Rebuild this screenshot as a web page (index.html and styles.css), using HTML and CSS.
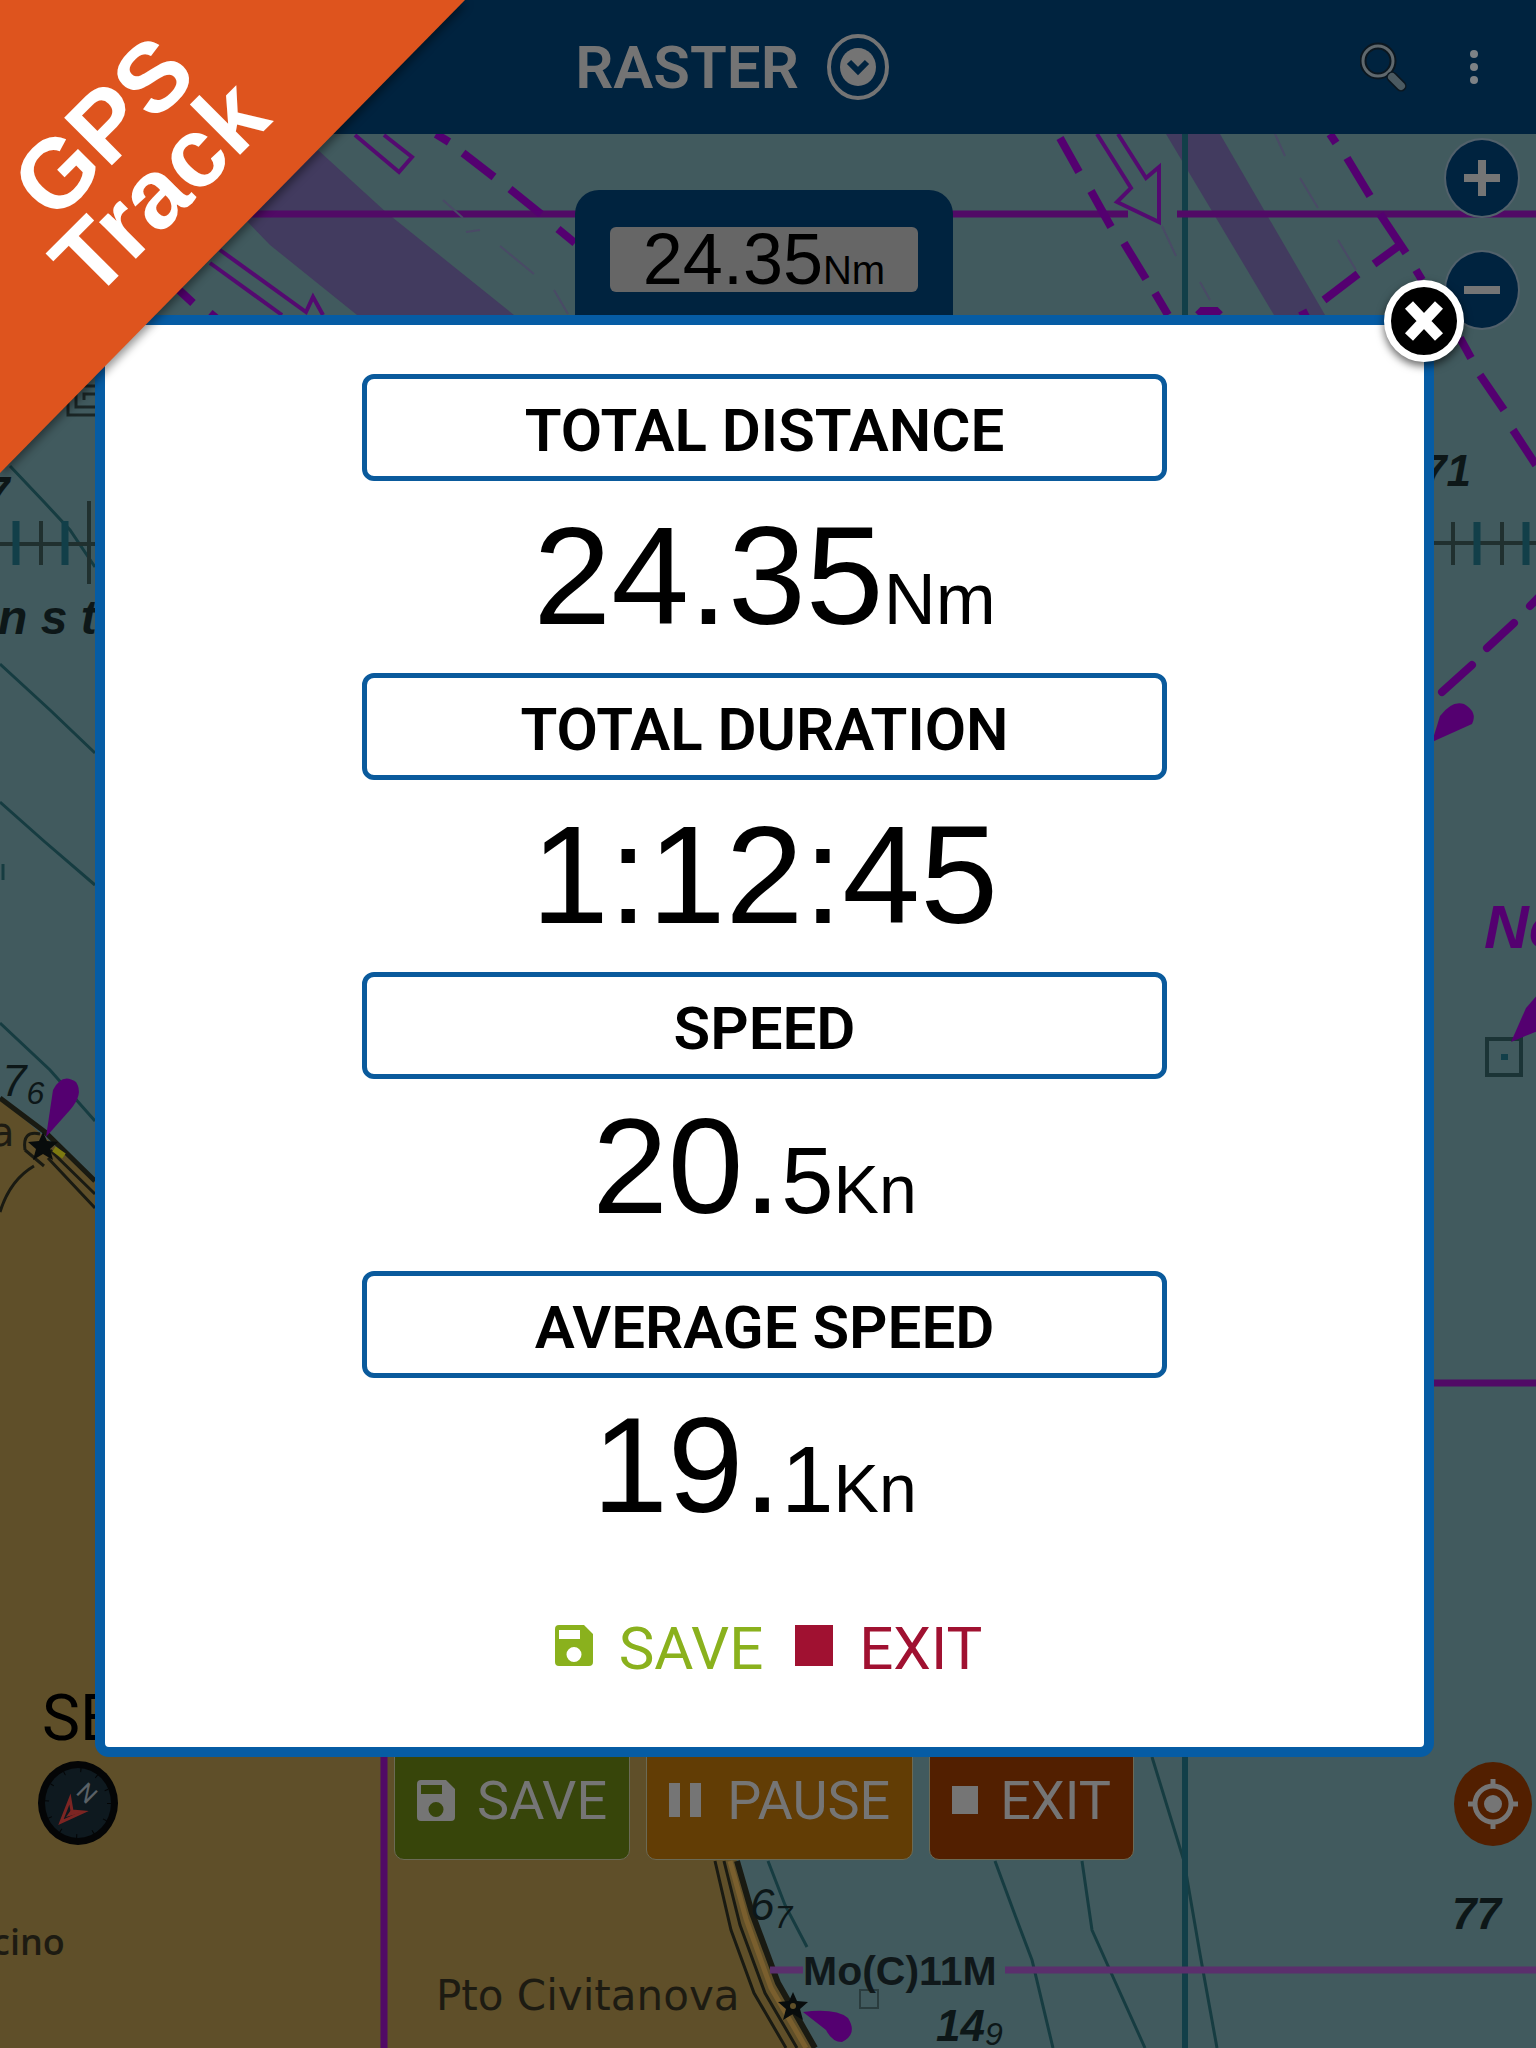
FILE: index.html
```html
<!DOCTYPE html>
<html lang="en">
  <head>
    <meta charset="UTF-8" />
    <meta name="viewport" content="width=device-width, initial-scale=1.0" />
    <title>GPS Track</title>
    <link rel="stylesheet" href="styles.css">
  </head>
  <body>
    <div class="app">
      <!-- Top Bar -->
      <header class="topbar">
        <div class="topbar-side"></div>
        <button class="chart-type">
          RASTER
          <svg class="chart-type-icon" viewBox="0 0 62 66">
            <ellipse cx="31" cy="33" rx="29" ry="31" fill="none" stroke="currentColor" stroke-width="4" />
            <ellipse cx="31" cy="33" rx="18" ry="19" fill="currentColor" />
            <path d="M22 28l9 9 9-9" fill="none" stroke="#00233f" stroke-width="6" />
          </svg>
        </button>
        <div class="topbar-side topbar-tools">
          <button class="icon-btn" aria-label="Search">
            <svg width="48" height="52" viewBox="0 0 48 52">
              <circle cx="18" cy="20" r="15" fill="none" stroke="#0b1720" stroke-width="7" />
              <circle cx="18" cy="20" r="15" fill="none" stroke="#5f686d" stroke-width="3" />
              <path d="M28 32l3 3" stroke="#5f686d" stroke-width="4" />
              <path d="M32 36l9 9" stroke="#0b1720" stroke-width="11" stroke-linecap="round" />
              <path d="M32 36l9 9" stroke="#4b5a61" stroke-width="8" stroke-linecap="round" />
            </svg>
          </button>
          <button class="icon-btn" aria-label="More">
            <svg width="12" height="36" viewBox="0 0 12 36" fill="#7d8286">
              <circle cx="6" cy="5" r="4" />
              <circle cx="6" cy="18" r="4" />
              <circle cx="6" cy="31" r="4" />
            </svg>
          </button>
        </div>
      </header>

      <!-- Nautical chart -->
      <svg class="chart" viewBox="0 0 1536 2048" preserveAspectRatio="xMidYMid slice">
        <rect width="1536" height="2048" fill="#415a5e" />
        <path d="M0 1098L95 1181L700 1740L737 1861L752 1913L778 1983L815 2048H0z" fill="#5f4f29" />

        <!-- depth contours -->
        <g class="contour">
          <path d="M10 466L45 503L70 530L95 567" />
          <path d="M0 664L50 710L95 753" />
          <path d="M0 802L45 842L95 885" />
          <path d="M0 1023L50 1070L95 1121" />
          <path d="M768 1861L785 1905L807 1947" />
          <path d="M995 1861L1015 1915L1032 1960L1053 2048" />
          <path d="M1082 1861L1092 1930L1113 1977L1145 2048" />
          <path d="M1152 1757L1184 1861L1200 1954L1217 2048" />
          <path d="M3 864v16" />
        </g>

        <!-- coast and roads -->
        <g class="coast">
          <path d="M0 1098L45 1132L95 1181" stroke-width="5" />
          <path d="M50 1150L95 1194M48 1158L95 1208" />
          <path d="M25 1150Q22 1130 40 1134M25 1150L44 1166" />
          <path d="M0 1212Q10 1180 34 1166" />
          <path d="M737 1861L752 1913L778 1983L815 2048" stroke-width="6" />
          <path d="M724 1861L740 1925L765 1993L797 2048" />
          <path d="M715 1861L731 1930L754 1993L786 2048" />
        </g>
        <path d="M730 1861L746 1919L771 1988L806 2048" fill="none" stroke="#7a5f2e" stroke-width="5" />

        <!-- traffic lanes -->
        <g fill="#423b5f">
          <path d="M240 214L318 150L387 213L514 315H357L270 245z" />
          <path d="M1166 134H1220L1325 315H1274z" />
        </g>
        <path d="M1185 134V315M1185 1757V2048" stroke="#123f49" stroke-width="6" />
        <path d="M0 214H1128M1177 214H1536M1434 1383H1536M384 1757V2048" stroke="#510a66" stroke-width="7" />
        <path d="M770 1970H803M1005 1970H1536" stroke="#5a2f6c" stroke-width="7" />
        <g class="lane">
          <path d="M436 134L449 142M463 153L494 177M510 189L541 214M558 229L575 243" />
          <path d="M179 290L193 303M210 313L216 318" />
          <path d="M1060 138L1079 172M1091 191L1111 227M1124 243L1146 279M1155 293L1168 315" />
          <path d="M1330 134L1336 143M1347 158L1370 196" />
          <path d="M1380 214L1406 253M1416 270L1422 280M1460 338L1471 358M1480 375L1504 410M1513 430L1536 465" />
          <path d="M1400 245L1374 264M1358 274L1324 300M1308 312L1300 316" />
          <path d="M1442 692L1472 665M1487 648L1514 623M1530 606L1540 596" stroke-linecap="round" />
          <path d="M1198 315l4-4h14l4 4" />
        </g>
        <g class="lane-arrow">
          <path d="M355 135L399 172L412 157L384 135" />
          <path d="M220 250L306 312L313 297L323 315M210 263L282 315" />
          <path d="M1097 134L1131 188L1117 202L1159 222V167L1146 178L1118 134" />
        </g>
        <path d="M443 200l20 18m3 14l14-2M500 246l34 28M554 290l14 24M1275 134l10 22M1300 178l18 30M1338 240l18 30M1162 226l14 30M1200 282l10 18" fill="none" stroke="#4a4a66" stroke-width="2" />

        <!-- latitude scales -->
        <path d="M0 544H95M1434 543H1536M41 521V565M89 501V584M1453 522V565M1502 522V565" stroke="#20302f" stroke-width="4" />
        <path d="M16 521V565M65 521V565M1477 522V565M1526 522V565" stroke="#123f49" stroke-width="7" />
        <path d="M100 386H76V407H100M100 415H68V386M84 400V394H95" fill="none" stroke="#1b2626" stroke-width="3" />
        <rect x="1487" y="1039" width="34" height="36" fill="none" stroke="#1b3436" stroke-width="4" />
        <rect x="1501" y="1054" width="7" height="6" fill="#123f49" />
        <rect x="860" y="1990" width="18" height="18" fill="none" stroke="#2a3c3e" stroke-width="2" />

        <!-- lights -->
        <g fill="#540070">
          <path d="M46 1137L53 1090Q62 1072 76 1082Q84 1094 70 1110z" />
          <path d="M1432 742L1440 716Q1452 700 1464 704Q1478 712 1472 724z" />
          <path d="M1511 1042L1526 1008L1540 992V1030z" />
          <path d="M803 2012Q836 2008 848 2018Q858 2034 842 2042Q832 2042 826 2030z" />
        </g>
        <g fill="#080c0c">
          <path d="M43 1132l4 9 11 1-8 7 3 11-10-6-10 6 3-11-8-7 11-1z" />
          <path d="M793 1992l4 9 11 1-8 7 3 11-10-6-10 6 3-11-8-7 11-1z" />
        </g>
        <circle cx="793" cy="2006" r="3" fill="#5f4f29" />
        <path d="M54 1149l10 7" stroke="#7d7a10" stroke-width="6" />

        <g class="soundings">
          <text x="1422" y="486">71</text>
          <text x="1452" y="1929">77</text>
          <text x="-15" y="508">7</text>
          <text x="-2" y="634" class="sea-name">n s t</text>
          <text x="2" y="1096" class="thin">7<tspan class="sub" dy="8">6</tspan></text>
          <text x="750" y="1920" class="thin">6<tspan class="sub" dy="8">7</tspan></text>
          <text x="936" y="2041">14<tspan class="sub" dy="4">9</tspan></text>
          <text x="1484" y="948" class="note">No</text>
        </g>
        <g class="places">
          <text x="-8" y="1955" class="village">cino</text>
          <text x="-10" y="1146">a</text>
          <text x="436" y="2010" class="town">Pto Civitanova</text>
          <text x="803" y="1985" class="light">Mo(C)11M</text>
        </g>
      </svg>

      <div class="track-header">
        <div class="track-display"><p class="track-screen">24.35<span>Nm</span></p></div>
      </div>

      <div class="zoom-controls">
        <button class="round-btn" aria-label="Zoom in">
          <svg width="40" height="40" viewBox="0 0 40 40"><path d="M2 20h36M20 2v36" stroke="currentColor" stroke-width="8" /></svg>
        </button>
        <button class="round-btn" aria-label="Zoom out">
          <svg width="40" height="40" viewBox="0 0 40 40"><path d="M2 20h36" stroke="currentColor" stroke-width="8" /></svg>
        </button>
      </div>

      <!-- Compass -->
      <div class="heading">
        <span class="heading-text">SE</span>
        <svg width="80" height="84" viewBox="0 0 80 84">
          <ellipse cx="40" cy="42" rx="40" ry="42" fill="#040506" />
          <ellipse cx="40" cy="42" rx="33" ry="35" fill="#0e191f" />
          <ellipse cx="40" cy="42" rx="31" ry="33" fill="none" stroke="#040506" stroke-width="4" stroke-dasharray="1 16" />
          <text class="north" transform="translate(37 32) rotate(45)">N</text>
          <path d="M23 61L32 38L34 50L45 51z" fill="none" stroke="#7c2523" stroke-width="3" />
          <path d="M28 56L33 49L46 51z" fill="#7c2523" />
        </svg>
      </div>

      <button class="locate-btn" aria-label="My position">
        <svg width="50" height="50" viewBox="0 0 50 50" fill="none" stroke="currentColor" stroke-width="5">
          <circle cx="25" cy="25" r="18" />
          <path d="M25 0v8M25 42v8M0 25h8M42 25h8" />
          <circle cx="25" cy="25" r="9" fill="currentColor" stroke="none" />
        </svg>
      </button>

      <div class="track-toolbar">
        <button class="tool-btn tool-save">
          <svg width="38" height="41" viewBox="0 0 38 41"><path fill="currentColor" fill-rule="evenodd" d="M4 0H29L38 9V37Q38 41 34 41H4Q0 41 0 37V4Q0 0 4 0zM4 5V14H25V5zM19 22A7 7 0 1 0 19 37A7 7 0 1 0 19 22z" /></svg>
          SAVE
        </button>
        <button class="tool-btn tool-pause">
          <svg width="32" height="34" viewBox="0 0 32 34"><path fill="currentColor" d="M0 0h11v34H0zM21 0h11v34H21z" /></svg>
          PAUSE
        </button>
        <button class="tool-btn tool-exit">
          <svg width="26" height="28" viewBox="0 0 26 28"><path fill="currentColor" d="M0 0h26v28H0z" /></svg>
          EXIT
        </button>
      </div>

      <!-- Track summary -->
      <div class="overlay">
        <div class="dialog" role="dialog" aria-label="GPS Track">
          <button class="close-btn" aria-label="Close">
            <svg width="66" height="66" viewBox="0 0 66 66"><path d="M18 17l30 32M48 17L18 49" stroke="#fff" stroke-width="11" /></svg>
          </button>

          <h2 class="stat-label">TOTAL DISTANCE</h2>
          <p class="stat-value">24.35<span class="unit">Nm</span></p>

          <h2 class="stat-label">TOTAL DURATION</h2>
          <p class="stat-value">1:12:45</p>

          <h2 class="stat-label">SPEED</h2>
          <p class="stat-value stat-speed">20.<span class="decimal">5</span><span class="unit">Kn</span></p>

          <h2 class="stat-label">AVERAGE SPEED</h2>
          <p class="stat-value stat-speed">19.<span class="decimal">1</span><span class="unit">Kn</span></p>

          <div class="dialog-actions">
            <button class="action-btn action-save">
              <svg width="38" height="41" viewBox="0 0 38 41"><path fill="currentColor" fill-rule="evenodd" d="M4 0H29L38 9V37Q38 41 34 41H4Q0 41 0 37V4Q0 0 4 0zM4 5V14H25V5zM19 22A7 7 0 1 0 19 37A7 7 0 1 0 19 22z" /></svg>
              SAVE
            </button>
            <button class="action-btn action-exit">
              <svg width="38" height="41" viewBox="0 0 38 41"><path fill="currentColor" d="M0 0h38v41H0z" /></svg>
              EXIT
            </button>
          </div>
        </div>
      </div>

      <!-- Corner ribbon -->
      <svg class="ribbon" width="480" height="490" viewBox="0 0 480 490">
        <path d="M0 0H465L0 473z" fill="#de541e" />
        <g class="ribbon-text" transform="rotate(-45)">
          <text x="-17" y="196">GPS</text>
          <text x="-20" y="279">Track</text>
        </g>
      </svg>
    </div>
  </body>
</html>
```
FILE: styles.css
```css
* {
  box-sizing: border-box;
}

body {
  margin: 0;
  font-family: Roboto, "Liberation Sans", sans-serif;
  background-color: #415a5e;
}

button {
  border: none;
  padding: 0;
  background: none;
  font-family: inherit;
  cursor: pointer;
}

svg {
  display: block;
  flex: none;
}

h2,
p {
  margin: 0;
}

.app {
  position: relative;
  min-height: 100vh;
  overflow: hidden;
}

/* Top bar */
.topbar {
  position: relative;
  z-index: 1;
  display: flex;
  align-items: center;
  height: 134px;
  padding-right: 56px;
  background-color: #00233f;
}

.topbar-side {
  flex: 1;
}

.topbar-tools {
  display: flex;
  justify-content: flex-end;
  align-items: center;
  gap: 60px;
}

.chart-type {
  display: flex;
  align-items: center;
  gap: 28px;
  margin-right: 16px;
  color: #747474;
  font-size: 60px;
  font-weight: 600;
}

.chart-type-icon {
  width: 62px;
  height: 66px;
}

/* Chart */
.chart {
  position: absolute;
  top: 0;
  left: 0;
  width: 100%;
  height: 100%;
}

.contour {
  fill: none;
  stroke: #163c41;
  stroke-width: 3;
}

.coast {
  fill: none;
  stroke: #191a12;
  stroke-width: 3;
}

.lane {
  fill: none;
  stroke: #540070;
  stroke-width: 8;
}

.lane-arrow {
  fill: none;
  stroke: #540a70;
  stroke-width: 4;
}

.soundings {
  fill: #0d1718;
  font-family: "Liberation Sans", Arial, sans-serif;
  font-size: 44px;
  font-style: italic;
  font-weight: bold;
}

.soundings .thin {
  font-weight: normal;
}

.soundings .sub {
  font-size: 32px;
  font-weight: normal;
}

.soundings .sea-name {
  font-size: 48px;
}

.soundings .note {
  fill: #540070;
  font-size: 62px;
}

.places {
  fill: #1d1b12;
  font-family: "DejaVu Sans", sans-serif;
  font-size: 40px;
}

.places .village {
  font-family: "Open Sans", sans-serif;
  font-size: 36px;
  font-weight: 600;
}

.places .town {
  font-size: 42px;
}

.places .light {
  fill: #10181a;
  font-family: "Liberation Sans", Arial, sans-serif;
  font-size: 41px;
  font-weight: bold;
}

/* Distance display */
.track-header {
  position: relative;
  display: flex;
  justify-content: center;
  padding: 56px 8px 0 0;
}

.track-display {
  width: 378px;
  padding: 37px 35px;
  border-radius: 24px 24px 0 0;
  background-color: #00233f;
}

.track-screen {
  height: 65px;
  border-radius: 6px;
  background-color: #666;
  color: #000;
  font-family: "Liberation Sans", Arial, sans-serif;
  font-size: 72px;
  line-height: 65px;
  text-align: center;
}

.track-screen span {
  font-size: 40px;
}

/* Map controls */
.zoom-controls {
  position: absolute;
  top: 138px;
  right: 16px;
  display: flex;
  flex-direction: column;
  gap: 32px;
}

.round-btn,
.locate-btn {
  display: flex;
  align-items: center;
  justify-content: center;
  width: 76px;
  height: 80px;
  border: 2px solid #52616b;
  border-radius: 50%;
  background-color: #00233f;
  color: #757575;
}

.locate-btn {
  position: absolute;
  right: 4px;
  bottom: 202px;
  width: 78px;
  height: 84px;
  border: none;
  background-color: #521f00;
}

.heading {
  position: absolute;
  bottom: 203px;
  left: 38px;
}

.heading-text {
  display: block;
  padding-left: 4px;
  color: #000;
  font-size: 64px;
  line-height: 84px;
}

.north {
  fill: #5a6166;
  font-size: 24px;
}

.track-toolbar {
  position: absolute;
  right: 0;
  bottom: 188px;
  left: 0;
  display: flex;
  justify-content: center;
  gap: 16px;
  padding-right: 8px;
}

.tool-btn {
  display: flex;
  align-items: center;
  gap: 22px;
  height: 120px;
  padding: 0 22px;
  border: 1px solid #6b6a55;
  border-radius: 10px;
  color: #757575;
  font-size: 54px;
}

.tool-save {
  background-color: #37450a;
}

.tool-pause {
  gap: 26px;
  background-color: #623d05;
}

.tool-exit {
  background-color: #521f00;
}

/* Dialog */
.overlay {
  position: absolute;
  top: 0;
  right: 0;
  left: 0;
  z-index: 2;
  padding: 315px 102px 0 95px;
}

.dialog {
  position: relative;
  display: flex;
  flex-direction: column;
  align-items: center;
  padding: 49px 0 61px;
  border: 10px solid #065ca4;
  border-radius: 14px;
  background-color: #fff;
}

.close-btn {
  position: absolute;
  top: -45px;
  right: -40px;
  width: 80px;
  height: 82px;
  display: flex;
  align-items: center;
  justify-content: center;
  border: 7px solid #fff;
  border-radius: 50%;
  background-color: #000;
  box-shadow: 0 4px 8px rgba(0, 0, 0, 0.6);
}

.stat-label {
  width: 61%;
  padding-top: 6px;
  border: 5px solid #0a5a9c;
  border-radius: 12px;
  color: #000;
  font-size: 60px;
  font-weight: 600;
  line-height: 91px;
  text-align: center;
}

.stat-value {
  padding-bottom: 2px;
  color: #000;
  font-family: "Liberation Sans", Arial, sans-serif;
  font-size: 140px;
  line-height: 190px;
}

.stat-value span {
  line-height: 1;
}

.stat-speed {
  padding: 0 20px 18px 0;
  font-size: 136px;
  line-height: 174px;
}

.decimal {
  font-size: 94px;
}

.unit {
  font-size: 72px;
}

.stat-speed .unit {
  font-size: 68px;
}

.dialog-actions {
  display: flex;
  gap: 32px;
  margin-top: 42px;
  padding-left: 8px;
}

.action-btn {
  display: flex;
  align-items: center;
  gap: 26px;
  font-size: 60px;
  line-height: 74px;
}

.action-btn svg {
  margin-bottom: 8px;
}

.action-save {
  color: #8ab11d;
}

.action-exit {
  color: #a01131;
}

/* Ribbon */
.ribbon {
  position: absolute;
  top: 0;
  left: 0;
  z-index: 3;
  filter: drop-shadow(2px 4px 4px rgba(0, 0, 0, 0.4));
}

.ribbon-text {
  fill: #fff;
  font-family: "Liberation Sans", Arial, sans-serif;
  font-size: 98px;
  font-weight: bold;
  text-anchor: middle;
}
```
